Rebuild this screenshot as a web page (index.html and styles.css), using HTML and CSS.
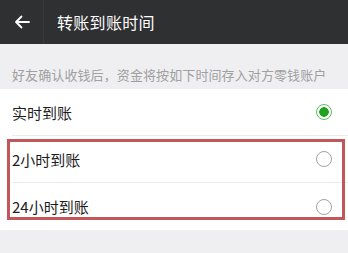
FILE: index.html
```html
<!DOCTYPE html>
<html lang="zh">
<head>
<meta charset="utf-8">
<link rel="stylesheet" href="styles.css">
</head>
<body>
<div class="page">
  <header class="bar">
    <div class="back">
      <svg width="16" height="14" viewBox="0 0 16 14"><path d="M15 7H2M7.5 1.5L2 7l5.5 5.5" fill="none" stroke="#fff" stroke-width="1.8" stroke-linecap="round" stroke-linejoin="round"/></svg>
    </div>
    <div class="title">转账到账时间</div>
  </header>
  <div class="hint">好友确认收钱后，资金将按如下时间存入对方零钱账户</div>
  <ul class="list">
    <li class="row"><span>实时到账</span><span class="radio on"></span></li>
    <li class="row"><span>2小时到账</span><span class="radio"></span></li>
    <li class="row last"><span>24小时到账</span><span class="radio"></span></li>
  </ul>
  <div class="mark"></div>
</div>
</body>
</html>
```
FILE: styles.css
```css
html, body {
  margin: 0;
  padding: 0;
  background: #efeff1;
}
.page {
  position: relative;
  width: 348px;
  height: 253px;
  overflow: hidden;
  font-family: "Noto Sans CJK SC", "Noto Sans", sans-serif;
}
.bar {
  height: 44px;
  background: #2f3032;
  display: flex;
  align-items: center;
}
.back {
  width: 44px;
  height: 44px;
  display: flex;
  align-items: center;
  justify-content: center;
  border-right: 1px solid #38393b;
  box-sizing: border-box;
}
.back svg {
  display: block;
}
.title {
  margin-left: 13px;
  color: #ffffff;
  font-size: 16px;
  line-height: 20px;
  letter-spacing: 0.3px;
}
.hint {
  height: 45px;
  box-sizing: border-box;
  padding: 22px 0 0 12px;
  font-size: 13px;
  line-height: 17px;
  color: #a0a0a0;
  white-space: nowrap;
  letter-spacing: 0.1px;
}
.list {
  list-style: none;
  margin: 0;
  padding: 0 0 0 12px;
  background: #ffffff;
}
.row {
  height: 47px;
  box-sizing: border-box;
  display: flex;
  align-items: center;
  justify-content: space-between;
  padding-right: 16px;
  border-bottom: 1px solid #ececec;
  font-size: 15px;
  color: #1c1c1c;
}
.row.last {
  border-bottom: none;
}
.radio {
  width: 16px;
  height: 16px;
  box-sizing: border-box;
  border: 1px solid #a3a3a3;
  border-radius: 50%;
}
.radio.on {
  border: 1.5px solid #5cc15b;
  background: radial-gradient(circle, #1fa31f 0 4.5px, #ffffff 5px);
}
.mark {
  position: absolute;
  left: 7px;
  top: 139px;
  width: 338px;
  height: 81px;
  box-sizing: border-box;
  border: 3px solid #c2575a;
}
```
